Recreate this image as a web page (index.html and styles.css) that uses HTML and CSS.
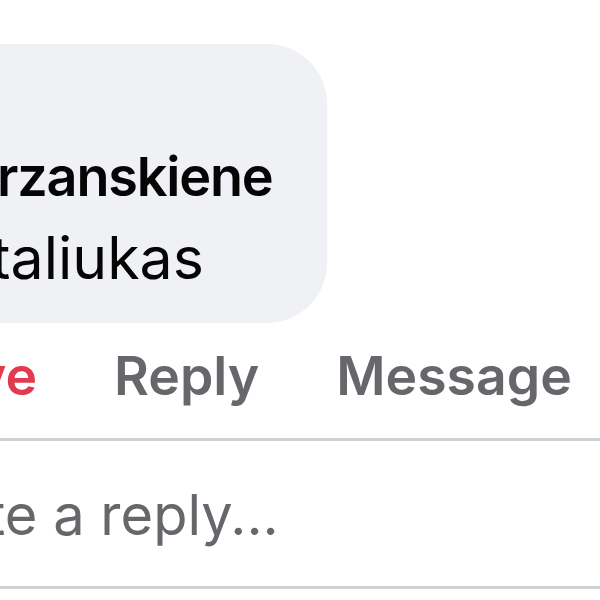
FILE: index.html
```html
<!DOCTYPE html>
<html>
<head>
<meta charset="utf-8">
<link rel="stylesheet" href="styles.css">
</head>
<body>
<div class="page">
  <div class="bubble">
    <div class="name">rzanskiene</div>
    <div class="msg">taliukas</div>
  </div>
  <div class="actions">
    <span class="action love">ve</span>
    <span class="action">Reply</span>
    <span class="action">Message</span>
  </div>
  <div class="divider"></div>
  <div class="composer">te a reply...</div>
  <div class="divider"></div>
</div>
</body>
</html>
```
FILE: styles.css
```css
html, body {
  margin: 0;
  padding: 0;
  background: #ffffff;
}
body {
  width: 600px;
  height: 600px;
  overflow: hidden;
  font-family: Inter, "Noto Sans", sans-serif;
}
.page {
  display: flex;
  flex-direction: column;
  width: 600px;
}
.bubble {
  margin-top: 44px;
  width: 327px;
  height: 279px;
  box-sizing: border-box;
  padding-top: 103px;
  background: #f0f1f4;
  border-radius: 0 60px 60px 0;
  display: flex;
  flex-direction: column;
}
.name {
  font-size: 54px;
  line-height: 60px;
  font-weight: 600;
  letter-spacing: -1.2px;
  color: #050505;
  text-indent: -3px;
  white-space: nowrap;
}
.msg {
  margin-top: 21px;
  font-size: 59px;
  line-height: 60px;
  font-weight: 400;
  letter-spacing: 0;
  color: #050505;
  text-indent: -9px;
  white-space: nowrap;
}
.actions {
  margin-top: 23px;
  display: flex;
  gap: 77px;
  margin-left: -25px;
  font-size: 53.5px;
  line-height: 60px;
  font-weight: 600;
  color: #65676b;
  white-space: nowrap;
}
.love {
  color: #e23b4e;
}
.divider {
  height: 3px;
  background: #cfd0d4;
}
.actions + .divider {
  margin-top: 32px;
}
.composer {
  margin-top: 44px;
  margin-bottom: 41px;
  font-size: 56px;
  line-height: 60px;
  font-weight: 400;
  color: #65676b;
  text-indent: -13px;
  white-space: nowrap;
}
```
